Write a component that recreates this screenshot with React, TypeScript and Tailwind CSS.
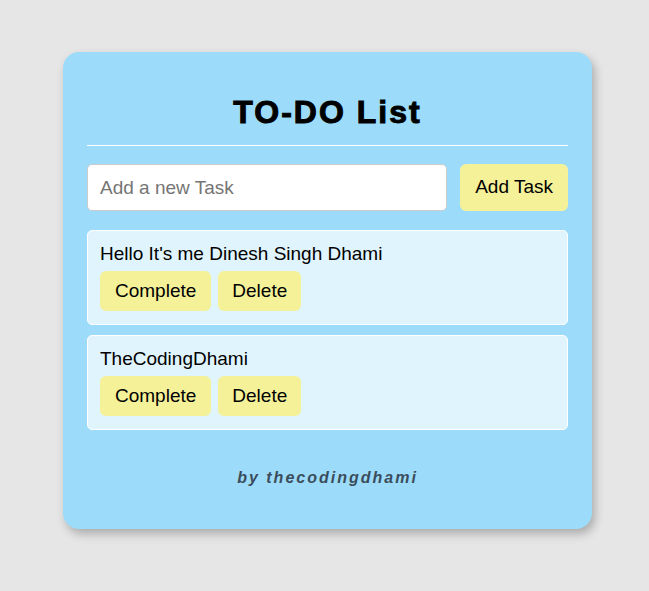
import React, { useState } from "react";

type Task = { id: number; text: string; done: boolean };

const App = () => {
  const [tasks, setTasks] = useState<Task[]>([
    { id: 1, text: "Hello It's me Dinesh Singh Dhami", done: false },
    { id: 2, text: "TheCodingDhami", done: false },
  ]);
  const [newTask, setNewTask] = useState<string>("");

  const addTask = () => {
    if (!newTask.trim()) return;
    setTasks([...tasks, { id: Date.now(), text: newTask, done: false }]);
    setNewTask("");
  };

  const toggleTask = (id: number) => {
    setTasks(tasks.map((t) => (t.id === id ? { ...t, done: !t.done } : t)));
  };

  const deleteTask = (id: number) => {
    setTasks(tasks.filter((t) => t.id !== id));
  };

  return (
    <div className="min-h-screen w-full bg-[#e6e6e6] flex justify-center pt-[52px] pl-[6px] font-['Liberation_Sans',Arial,sans-serif]">
      <div className="w-[529px] self-start bg-[#9cdcfa] rounded-2xl shadow-[3px_5px_10px_rgba(0,0,0,0.25)] px-6 pt-6 pb-[42px]">
        <h1 className="mt-[17px] text-center text-[32px] leading-[38px] font-bold tracking-[2px] text-black [-webkit-text-stroke:1px_black]">
          TO-DO List
        </h1>
        <hr className="mt-[14px] border-0 h-px bg-white" />

        <div className="mt-[18px] flex gap-[13px]">
          <input
            type="text"
            value={newTask}
            onChange={(e) => setNewTask(e.target.value)}
            placeholder="Add a new Task"
            className="flex-1 h-[47px] bg-white border border-[#cccccc] rounded-[5px] px-3 text-[19px] text-black placeholder:text-[#757575] outline-none"
          />
          <button
            onClick={addTask}
            className="h-[47px] px-[15px] bg-[#f4f199] rounded-[6px] text-[19px] text-black"
          >
            Add Task
          </button>
        </div>

        <ul className="mt-[19px] flex flex-col gap-[10px]">
          {tasks.map((task) => (
            <li
              key={task.id}
              className="bg-[#e0f4fd] border border-white rounded-[5px] px-3 pt-3 pb-[13px]"
            >
              <p
                className={`text-[19px] leading-[21px] text-black ${
                  task.done ? "line-through" : ""
                }`}
              >
                {task.text}
              </p>
              <div className="mt-[7px] flex gap-[7px]">
                <button
                  onClick={() => toggleTask(task.id)}
                  className="h-10 px-[15px] bg-[#f4f199] rounded-[6px] text-[19px] text-black"
                >
                  Complete
                </button>
                <button
                  onClick={() => deleteTask(task.id)}
                  className="h-10 px-[14px] bg-[#f4f199] rounded-[6px] text-[19px] text-black"
                >
                  Delete
                </button>
              </div>
            </li>
          ))}
        </ul>

        <p className="mt-[39px] text-center text-[16px] leading-[18px] italic font-bold tracking-[2px] text-[#3b4d5c]">
          by thecodingdhami
        </p>
      </div>
    </div>
  );
};

export default App;
